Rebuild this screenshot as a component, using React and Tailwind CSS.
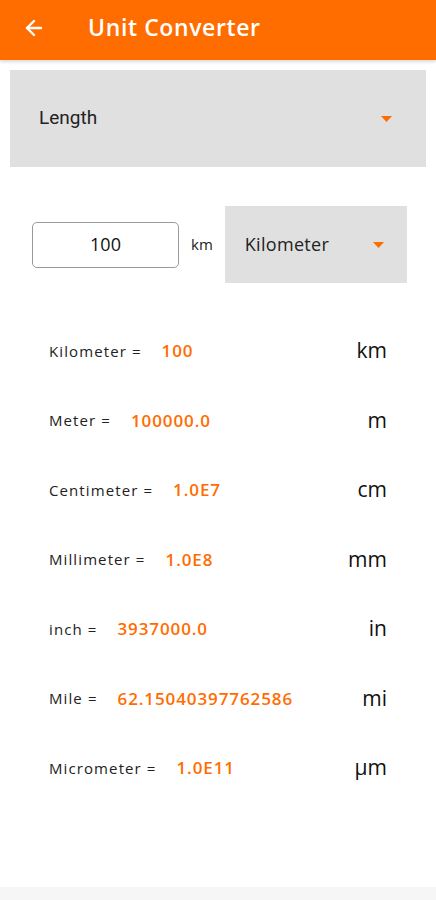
import { ArrowLeft } from "lucide-react";

const results = [
  { label: "Kilometer =", value: "100", unit: "km" },
  { label: "Meter =", value: "100000.0", unit: "m" },
  { label: "Centimeter =", value: "1.0E7", unit: "cm" },
  { label: "Millimeter =", value: "1.0E8", unit: "mm" },
  { label: "inch =", value: "3937000.0", unit: "in" },
  { label: "Mile =", value: "62.15040397762586", unit: "mi" },
  { label: "Micrometer =", value: "1.0E11", unit: "µm" },
];

function Caret({ className = "" }) {
  return (
    <svg width="11" height="6" viewBox="0 0 11 6" className={className}>
      <path d="M0 0 L11 0 L5.5 6 Z" fill="#ff6d00" />
    </svg>
  );
}

export default function App() {
  return (
    <div
      className="flex min-h-[900px] w-[436px] flex-col bg-white"
      style={{ fontFamily: "'Open Sans', 'Noto Sans', sans-serif" }}
    >
      <header className="flex h-[60px] items-center bg-[#ff6d00] pb-[5px] shadow-[0_2px_3px_rgba(0,0,0,0.15)]">
        <ArrowLeft className="ml-[22px] h-[24px] w-[24px] text-white" strokeWidth={2.4} />
        <h1 className="ml-[42px] text-[23px] font-semibold tracking-[0.6px] text-white">
          Unit Converter
        </h1>
      </header>

      <div className="px-[10px] pt-[10px]">
        <div className="flex h-[97px] items-center justify-between bg-[#e0e0e0] pl-[29px] pr-[34px]">
          <span className="text-[19px] text-[#222]" style={{ fontFamily: "Roboto, sans-serif" }}>
            Length
          </span>
          <Caret />
        </div>
      </div>

      <div className="mt-[39px] flex items-center pl-[32px]">
        <div className="flex h-[46px] w-[147px] items-center justify-center rounded-[5px] border border-[#9a9a9a] text-[18px] font-medium text-[#111]">
          100
        </div>
        <span className="ml-[12px] text-[15px] font-medium text-[#222]">km</span>
        <div className="ml-[12px] flex h-[77px] w-[182px] items-center justify-between bg-[#e0e0e0] pl-[20px] pr-[23px]">
          <span className="text-[18px] tracking-[0.3px] text-[#222]">Kilometer</span>
          <Caret />
        </div>
      </div>

      <div className="mt-[33px] flex flex-col pl-[49px] pr-[49px]">
        {results.map((r) => (
          <div key={r.label} className="flex h-[69.5px] items-center">
            <span className="text-[15px] font-medium tracking-[1.1px] text-[#222]">{r.label}</span>
            <span className="ml-[20px] text-[17px] font-semibold tracking-[0.9px] text-[#ff6d00]">
              {r.value}
            </span>
            <span className="ml-auto text-[21px] text-[#111]">{r.unit}</span>
          </div>
        ))}
      </div>

      <div className="flex-1" />
      <div className="h-[13px] bg-[#f6f6f6]" />
    </div>
  );
}
